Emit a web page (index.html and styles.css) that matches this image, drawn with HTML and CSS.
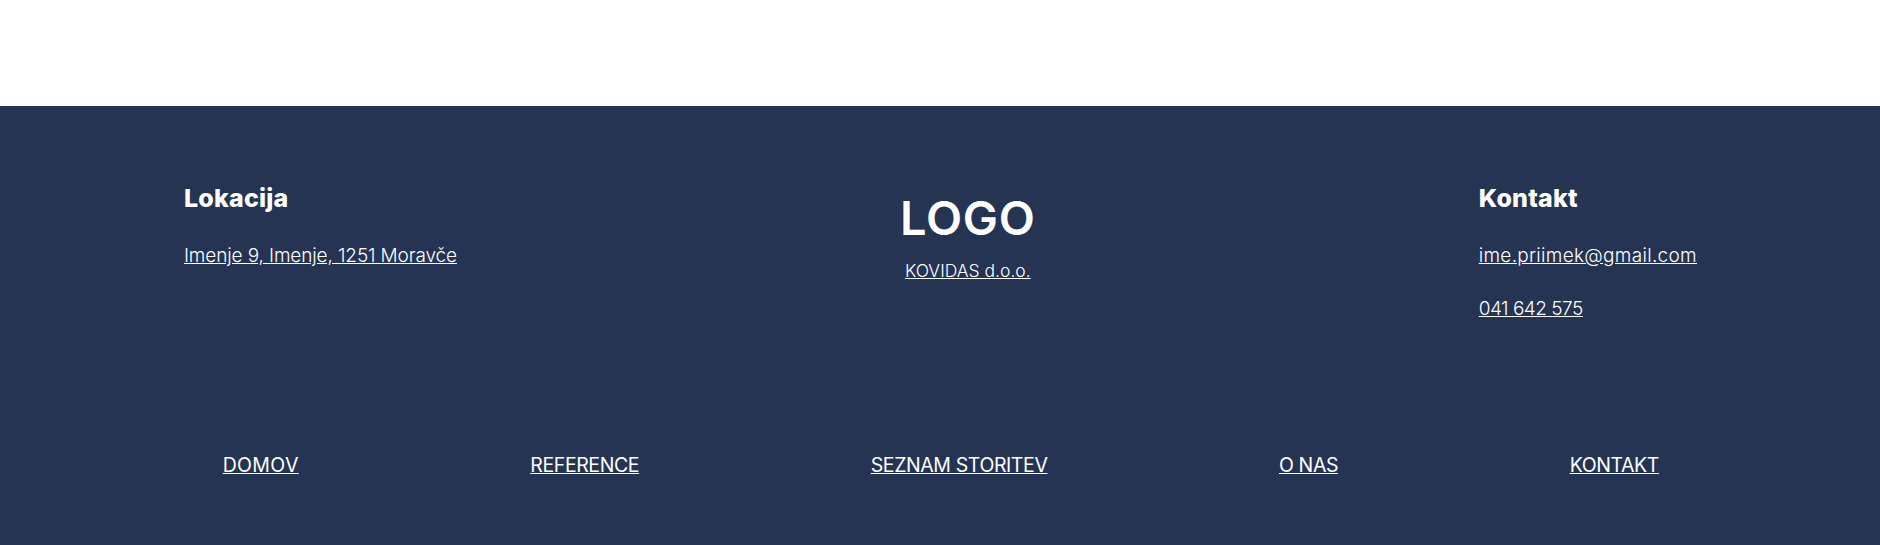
FILE: index.html
```html
<!DOCTYPE html>
<html lang="sl">
<head>
<meta charset="utf-8">
<title>Footer</title>
<link rel="stylesheet" href="styles.css">
</head>
<body>
<div class="spacer"></div>
<footer class="footer">
  <div class="footer-top">
    <div class="col">
      <h3 class="col-title">Lokacija</h3>
      <a class="col-link" href="#">Imenje 9, Imenje, 1251 Moravče</a>
    </div>
    <div class="col col-center">
      <div class="logo">LOGO</div>
      <a class="company" href="#">KOVIDAS d.o.o.</a>
    </div>
    <div class="col">
      <h3 class="col-title">Kontakt</h3>
      <a class="col-link email" href="#">ime.priimek@gmail.com</a>
      <a class="col-link phone" href="#">041 642 575</a>
    </div>
  </div>
  <nav class="footer-nav">
    <a class="nav-wide" href="#">DOMOV</a>
    <a href="#">REFERENCE</a>
    <a href="#">SEZNAM STORITEV</a>
    <a href="#">O NAS</a>
    <a href="#">KONTAKT</a>
  </nav>
</footer>
</body>
</html>
```
FILE: styles.css
```css
html, body {
  margin: 0;
  padding: 0;
  background: #ffffff;
}
body {
  font-family: Inter, "Open Sans", sans-serif;
  color: #ffffff;
}
.spacer {
  height: 106px;
}
.footer {
  background: #253453;
  height: 439px;
  padding-top: 74px;
  box-sizing: border-box;
}
.footer-top {
  display: flex;
  justify-content: space-between;
  align-items: flex-start;
  padding: 0 183px 0 184px;
}
.col {
  display: flex;
  flex-direction: column;
  align-items: flex-start;
}
.col-center {
  align-items: center;
}
.col-title {
  margin: 0;
  font-size: 25px;
  line-height: 36px;
  font-weight: 800;
  letter-spacing: 0.2px;
}
.col-link {
  margin-top: 26px;
  font-size: 19px;
  line-height: 28px;
  font-weight: 300;
  color: #ffffff;
  letter-spacing: -0.12px;
}
.col-link.email {
  letter-spacing: 0.3px;
}
.col-link.phone {
  margin-top: 25px;
  letter-spacing: -0.5px;
}
.logo {
  margin-top: 10px;
  font-size: 47px;
  line-height: 56px;
  font-weight: 600;
  letter-spacing: 0.8px;
}
.company {
  margin-top: 13px;
  font-size: 17.5px;
  line-height: 24px;
  font-weight: 300;
  color: #ffffff;
}
.footer-nav {
  display: flex;
  justify-content: space-between;
  margin-top: 128px;
  padding: 0 221px 0 222.7px;
}
.footer-nav a {
  font-size: 19.5px;
  line-height: 28px;
  font-weight: 400;
  letter-spacing: -0.4px;
  color: #ffffff;
}
.footer-nav a.nav-wide {
  letter-spacing: 0.35px;
}
```
